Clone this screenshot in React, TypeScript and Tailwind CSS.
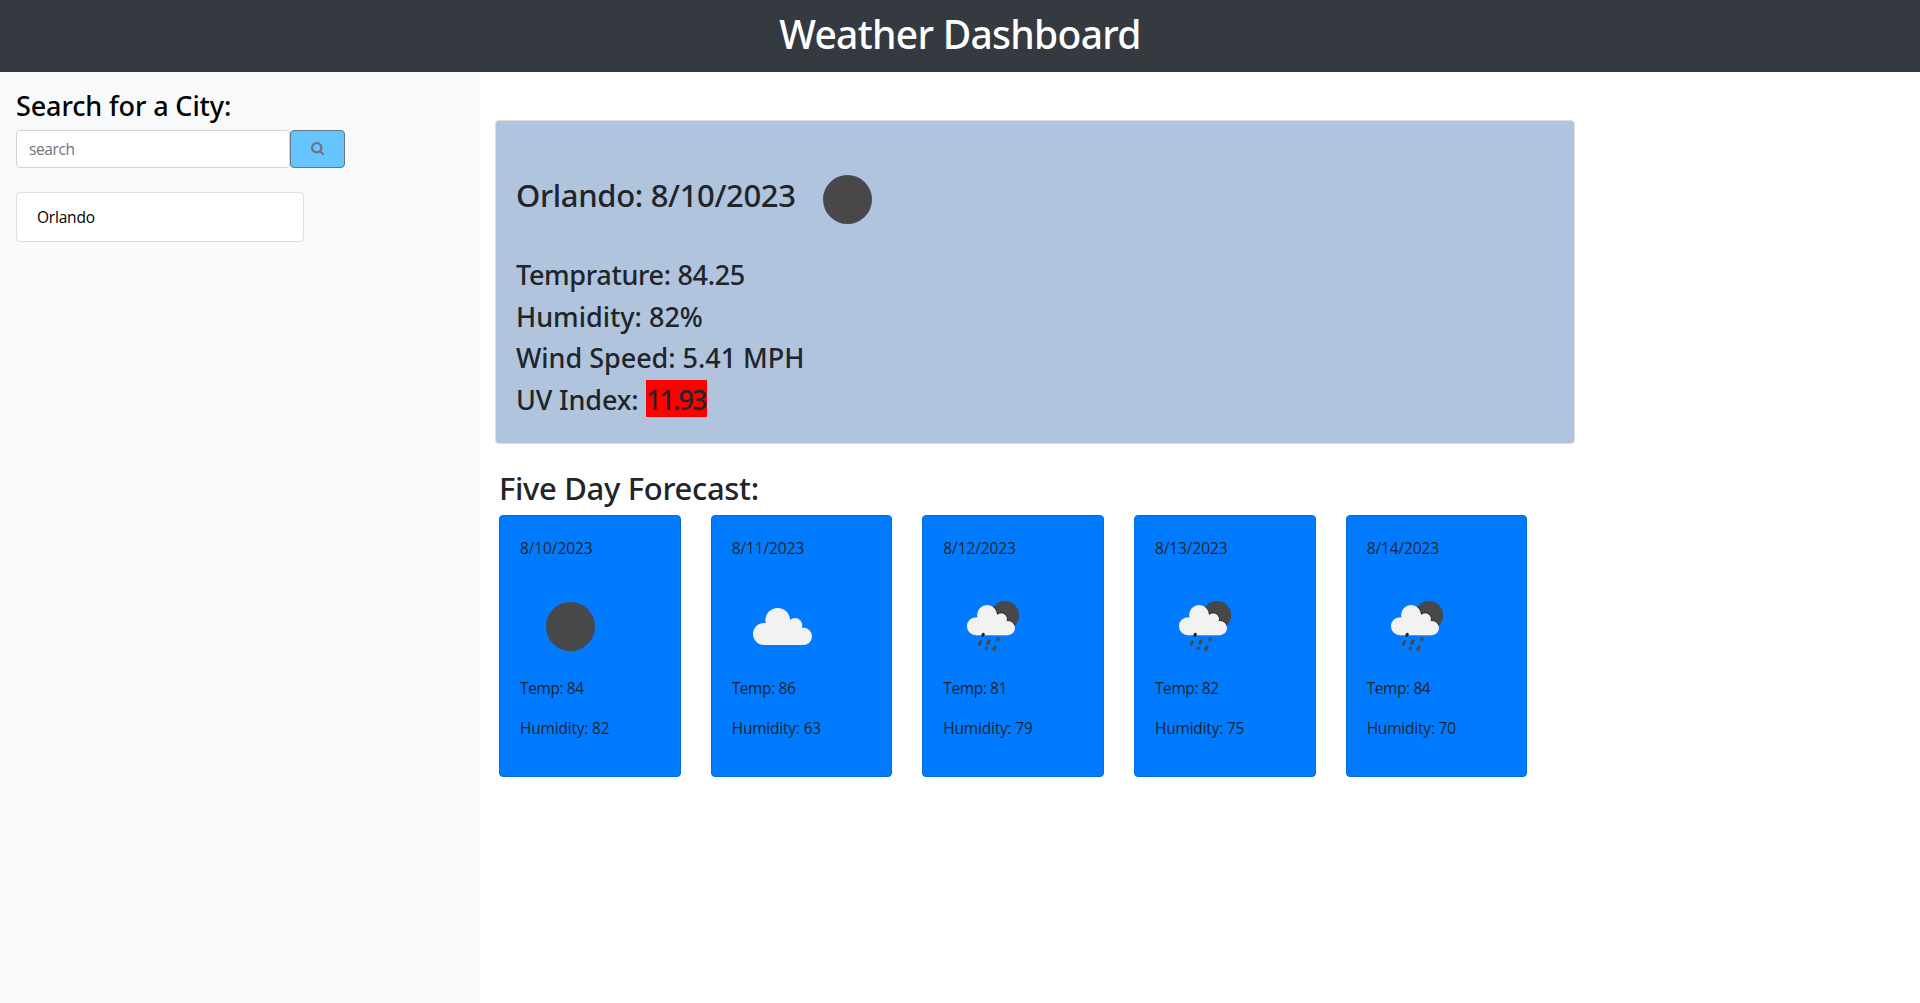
import type { ReactNode } from "react";

type Condition = "clear" | "cloudy" | "rain";

interface Day {
  date: string;
  condition: Condition;
  temp: number;
  humidity: number;
}

const days: Day[] = [
  { date: "8/10/2023", condition: "clear", temp: 84, humidity: 82 },
  { date: "8/11/2023", condition: "cloudy", temp: 86, humidity: 63 },
  { date: "8/12/2023", condition: "rain", temp: 81, humidity: 79 },
  { date: "8/13/2023", condition: "rain", temp: 82, humidity: 75 },
  { date: "8/14/2023", condition: "rain", temp: 84, humidity: 70 },
];

function SearchIcon() {
  return (
    <svg viewBox="0 0 1664 1664" fill="currentColor" className="size-[13.5px]">
      <path d="M1152 704q0-185-131.5-316.5T704 256 387.5 387.5 256 704t131.5 316.5T704 1152t316.5-131.5T1152 704zm512 832q0 52-38 90t-90 38q-54 0-90-38l-343-342q-179 124-399 124-143 0-273.5-55.5t-225-150-150-225T0 704t55.5-273.5 150-225 225-150T704 0t273.5 55.5 225 150 150 225T1408 704q0 220-124 399l343 343q37 37 37 90z" />
    </svg>
  );
}

function CloudShape() {
  return (
    <>
      <circle cx="45.7" cy="44.3" r="12.3" />
      <circle cx="32" cy="58" r="11" />
      <circle cx="63" cy="49.3" r="7.3" />
      <circle cx="71.3" cy="60.3" r="8.7" />
      <path d="M32 69V56L45 44L63 50L71.3 60V69Z" />
    </>
  );
}

function WeatherIcon({ condition }: { condition: Condition }) {
  let drawing: ReactNode;
  if (condition === "clear") {
    drawing = <circle cx="50.5" cy="50.5" r="24.5" fill="#48484a" />;
  } else if (condition === "cloudy") {
    drawing = (
      <g fill="#f2f2f2">
        <CloudShape />
      </g>
    );
  } else {
    drawing = (
      <>
        <clipPath id="moon">
          <circle cx="62" cy="39.2" r="14.2" />
        </clipPath>
        <circle cx="62" cy="39.2" r="14.2" fill="#48484a" />
        <g clipPath="url(#moon)">
          <g transform="translate(6.9 3) scale(.8136)" fill="#2b2b2d" stroke="#2b2b2d" strokeWidth="2">
            <CloudShape />
          </g>
        </g>
        <g transform="translate(6.9 3) scale(.8136)" fill="#f2f2f2">
          <CloudShape />
        </g>
        <g stroke="#48484a" strokeWidth="3.1" strokeLinecap="round">
          <path d="M39.9 59.2L40.3 58.3" stroke="#222" />
          <path d="M36.3 68.4L37.5 65.8" />
          <path d="M44.8 67.6L46 64.8" />
          <path d="M54.8 63.7L55.1 63" />
          <path d="M43.2 72.5L43.4 72.1" />
          <path d="M50.9 73.7L52.1 71" />
        </g>
      </>
    );
  }
  return (
    <svg viewBox="0 0 100 100" className="size-[100px] shrink-0">
      {drawing}
    </svg>
  );
}

function ForecastCard({ day }: { day: Day }) {
  return (
    <div className="h-[262px] w-[181.67px] rounded border border-[#006ddf] bg-[#007bff] px-5 pt-5 font-['Open_Sans',sans-serif] text-[15.5px] leading-6">
      <p className="tracking-[-0.1px]">{day.date}</p>
      <div className="mt-4">
        <WeatherIcon condition={day.condition} />
      </div>
      <p className="tracking-[-0.4px]">Temp: {day.temp}</p>
      <p className="mt-4 tracking-[-0.2px]">Humidity: {day.humidity}</p>
    </div>
  );
}

export default function App() {
  return (
    <div className="flex min-h-screen flex-col bg-white font-['Noto_Sans',sans-serif] text-[#212529]">
      <header className="h-[72px] bg-[#343a40] pt-[10px] text-center">
        <h1 className="text-[39px] leading-[48px] font-medium tracking-[-0.7px] text-white">Weather Dashboard</h1>
      </header>

      <div className="flex grow">
        <aside className="w-[480px] shrink-0 bg-[#f8f9fb] px-4 pt-[17px] text-black">
          <h3 className="text-[27px] leading-[34px] font-medium tracking-[-0.12px]">Search for a City:</h3>
          <div className="mt-[7px] flex">
            <input
              placeholder="search"
              className="h-[38px] w-[274px] rounded border border-[#ced4da] bg-white px-3 font-['Open_Sans',sans-serif] text-[15.5px] tracking-[-0.4px] placeholder:text-[#6c757d]"
            />
            <button className="flex h-[38px] w-[55px] items-center justify-center rounded border border-[#6c757d] bg-[#66c4ff] pb-px text-[#6c757d]">
              <SearchIcon />
            </button>
          </div>
          <div className="mt-6 h-[50px] w-[288px] rounded border border-[#dfdfdf] bg-white px-5 font-['Open_Sans',sans-serif] text-[15.5px] leading-[48px] tracking-[-0.2px]">
            Orlando
          </div>
        </aside>

        <main className="pt-12 pl-[15px]">
          <section className="h-[324px] w-[1080px] rounded border border-[#dfdfdf] bg-[#b0c4de] px-5 pt-7 font-medium">
            <div className="flex items-start">
              <h2 className="mt-[27px] w-[281px] text-[31px] leading-[38px] tracking-[-0.33px] whitespace-nowrap">
                Orlando: 8/10/2023
              </h2>
              <WeatherIcon condition="clear" />
            </div>
            <div className="mt-[9px] flex flex-col gap-[7.6px] text-[27px] leading-[34px]">
              <h3 className="tracking-[-0.33px]">Temprature: 84.25</h3>
              <h3>Humidity: 82%</h3>
              <h3 className="tracking-[-0.04px]">Wind Speed: 5.41 MPH</h3>
              <h3 className="flex">
                <span className="w-[130px] tracking-[-0.15px]">UV Index:</span>
                <span className="mt-[-3px] h-[37px] w-[61px] bg-[#ff0000] leading-[39px] tracking-[-1.9px]">
                  11.93
                </span>
              </h3>
            </div>
          </section>

          <section className="pt-[25px] pl-1">
            <h2 className="text-[31px] leading-[38px] font-medium tracking-[-0.33px]">Five Day Forecast:</h2>
            <div className="mt-2 flex gap-[30px]">
              {days.map((day) => (
                <ForecastCard key={day.date} day={day} />
              ))}
            </div>
          </section>
        </main>
      </div>
    </div>
  );
}
